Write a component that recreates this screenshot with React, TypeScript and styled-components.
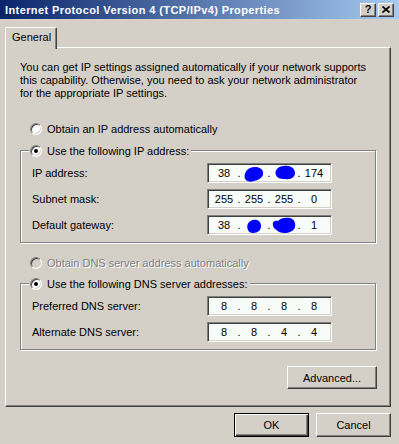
import React from "react";
import styled, { createGlobalStyle } from "styled-components";

const Global = createGlobalStyle`
  html, body { margin: 0; padding: 0; background: #d4d0c8; }
  body { font-family: "Liberation Sans", Arial, sans-serif; font-size: 11px; color: #000; }
  * { box-sizing: border-box; }
`;

const Window = styled.div`
  width: 399px;
  height: 444px;
  display: flex;
  flex-direction: column;
  background: #d4d0c8;
  overflow: hidden;
`;

const TitleBar = styled.div`
  height: 19px;
  flex: none;
  display: flex;
  align-items: center;
  justify-content: space-between;
  padding: 0 5px;
  background: linear-gradient(to right, #0a246a, #a6caf0);
`;

const Title = styled.span`
  color: #fff;
  font-weight: bold;
  font-size: 11px;
  letter-spacing: 0.4px;
  white-space: nowrap;
`;

const CaptionButtons = styled.div`
  display: flex;
  gap: 2px;
`;

const CaptionButton = styled.div`
  width: 16px;
  height: 14px;
  display: flex;
  align-items: center;
  justify-content: center;
  background: #d4d0c8;
  border: 1px solid;
  border-color: #fff #404040 #404040 #fff;
  box-shadow: inset -1px -1px 0 #808080;
  font-weight: bold;
  font-size: 11px;
  line-height: 1;
`;

const Body = styled.div`
  flex: 1;
  display: flex;
  flex-direction: column;
  padding: 8px 8px 8px 5px;
`;

const TabStrip = styled.div`
  display: flex;
  height: 20px;
`;

const Tab = styled.div`
  position: relative;
  z-index: 1;
  width: 52px;
  height: 22px;
  display: flex;
  align-items: flex-start;
  padding: 3px 0 0 6px;
  background: #d4d0c8;
  border-top: 1px solid #fff;
  border-left: 1px solid #fff;
  border-right: 1px solid #404040;
  border-radius: 2px 2px 0 0;
  box-shadow: inset -1px 0 0 #808080;
`;

const Panel = styled.div`
  height: 360px;
  display: flex;
  flex-direction: column;
  padding: 13px 14px 0 14px;
  border: 1px solid;
  border-color: #fff #404040 #404040 #fff;
  box-shadow: inset -1px -1px 0 #808080;
`;

const Description = styled.p`
  margin: 0;
  max-width: 348px;
  line-height: 13px;
`;

const RadioRow = styled.label<{ $indent?: number; $gap?: number; $disabled?: boolean }>`
  display: flex;
  align-items: center;
  gap: 5px;
  height: 13px;
  margin-left: ${(p) => p.$indent ?? 0}px;
  margin-top: ${(p) => p.$gap ?? 0}px;
  color: ${(p) => (p.$disabled ? "#808080" : "#000")};
  text-shadow: ${(p) => (p.$disabled ? "1px 1px 0 #fff" : "none")};
  white-space: nowrap;
`;

const RadioCircle = styled.span<{ $checked?: boolean; $disabled?: boolean }>`
  position: relative;
  width: 12px;
  height: 12px;
  flex: none;
  border-radius: 50%;
  background: ${(p) => (p.$disabled ? "#d4d0c8" : "#fff")};
  border: 1px solid;
  border-color: #808080 #fff #fff #808080;
  box-shadow: inset 1px 1px 0 #404040, inset -1px -1px 0 #d4d0c8;
  &::after {
    content: "";
    display: ${(p) => (p.$checked ? "block" : "none")};
    position: absolute;
    left: 3px;
    top: 3px;
    width: 4px;
    height: 4px;
    border-radius: 50%;
    background: #000;
  }
`;

const Group = styled.fieldset<{ $gap: number }>`
  margin: ${(p) => p.$gap}px 0 0 0;
  padding: 6px 43px 7px 11px;
  min-width: 0;
  border: 1px solid #808080;
  box-shadow: inset 1px 1px 0 #fff, 1px 1px 0 #fff;
`;

const Legend = styled.legend`
  padding: 0 2px 0 1px;
  margin-left: -3px;
  background: #d4d0c8;
`;

const FieldGrid = styled.div`
  display: grid;
  grid-template-columns: 1fr 125px;
  row-gap: 6px;
  align-items: center;
`;

const FieldLabel = styled.span`
  white-space: nowrap;
`;

const IPBox = styled.div`
  width: 125px;
  height: 20px;
  display: grid;
  grid-template-columns: 24px 6px 24px 6px 24px 6px 24px;
  align-items: center;
  justify-items: center;
  padding-left: 4px;
  background: #f8fcf8;
  border: 1px solid;
  border-color: #808080 #fff #fff #808080;
  box-shadow: inset 1px 1px 0 #404040, inset -1px -1px 0 #d4d0c8;
`;

const Octet = styled.span`
  position: relative;
  width: 24px;
  height: 16px;
  display: flex;
  align-items: center;
  justify-content: center;
`;

const Dot = styled.span`
  text-align: center;
`;

const BlobSvg = styled.svg`
  overflow: visible;
`;

const Button = styled.button<{ $w: number; $h: number; $default?: boolean }>`
  width: ${(p) => p.$w}px;
  height: ${(p) => p.$h}px;
  padding: 0;
  font: inherit;
  color: #000;
  background: #d4d0c8;
  border: 1px solid;
  border-color: ${(p) => (p.$default ? "#000" : "#fff #404040 #404040 #fff")};
  box-shadow: ${(p) =>
    p.$default
      ? "inset 1px 1px 0 #fff, inset -1px -1px 0 #404040, inset -2px -2px 0 #808080"
      : "inset -1px -1px 0 #808080"};
`;

const AdvancedRow = styled.div`
  display: flex;
  justify-content: flex-end;
  margin-top: 16px;
  margin-right: -1px;
`;

const Footer = styled.div`
  display: flex;
  justify-content: flex-end;
  gap: 7px;
  margin-top: 6px;
`;

const blobPaths: Record<string, string> = {
  a: "M3 15 C0 12 2 5 7 3 C12 1 19 2 20 7 C21 12 16 15 11 16 C8 17 5 17 3 15Z",
  b: "M2 10 C0 6 4 1 10 1 C16 0 21 3 21 8 C21 12 17 15 11 14 C6 14 3 13 2 10Z",
  c: "M3 12 C1 8 3 3 8 2 C13 1 16 4 16 8 C16 12 13 15 8 15 C5 15 4 14 3 12Z",
  d: "M1 8 C0 5 3 3 6 4 C8 1 14 0 18 1 C22 2 24 6 23 10 C22 14 17 16 12 16 C7 16 5 13 3 12 C2 11 1 10 1 8Z",
};

const Blob = ({ v, x, y }: { v: string; x: number; y: number }) => (
  <BlobSvg width={24} height={16} viewBox="0 0 24 16">
    <g transform={`translate(${x} ${y})`}>
      <path d={blobPaths[v]} fill="#0000ff" />
    </g>
  </BlobSvg>
);

type Oct = string | React.ReactNode;

const IPField = ({ octets }: { octets: Oct[] }) => (
  <IPBox>
    {octets.map((o, i) => (
      <React.Fragment key={i}>
        {i > 0 && <Dot>.</Dot>}
        <Octet>{o}</Octet>
      </React.Fragment>
    ))}
  </IPBox>
);

export default function App() {
  return (
    <>
      <Global />
      <Window>
        <TitleBar>
          <Title>Internet Protocol Version 4 (TCP/IPv4) Properties</Title>
          <CaptionButtons>
            <CaptionButton>?</CaptionButton>
            <CaptionButton>
              <svg width="8" height="7" viewBox="0 0 8 7">
                <path d="M0.5 0.5 L7.5 6.5 M7.5 0.5 L0.5 6.5" stroke="#000" strokeWidth="1.6" />
              </svg>
            </CaptionButton>
          </CaptionButtons>
        </TitleBar>
        <Body>
          <TabStrip>
            <Tab>General</Tab>
          </TabStrip>
          <Panel>
            <Description>
              You can get IP settings assigned automatically if your network supports
              this capability. Otherwise, you need to ask your network administrator
              for the appropriate IP settings.
            </Description>
            <RadioRow $indent={10} $gap={22}>
              <RadioCircle />
              Obtain an IP address automatically
            </RadioRow>
            <Group $gap={9}>
              <Legend>
                <RadioRow>
                  <RadioCircle $checked />
                  Use the following IP address:
                </RadioRow>
              </Legend>
              <FieldGrid>
                <FieldLabel>IP address:</FieldLabel>
                <IPField
                  octets={[
                    "38",
                    <Blob key="a" v="a" x={1} y={0} />,
                    <Blob key="b" v="b" x={2} y={0} />,
                    "174",
                  ]}
                />
                <FieldLabel>Subnet mask:</FieldLabel>
                <IPField octets={["255", "255", "255", "0"]} />
                <FieldLabel>Default gateway:</FieldLabel>
                <IPField
                  octets={[
                    "38",
                    <Blob key="c" v="c" x={3} y={1} />,
                    <Blob key="d" v="d" x={0} y={0} />,
                    "1",
                  ]}
                />
              </FieldGrid>
            </Group>
            <RadioRow $indent={10} $gap={13} $disabled>
              <RadioCircle $disabled />
              Obtain DNS server address automatically
            </RadioRow>
            <Group $gap={8}>
              <Legend>
                <RadioRow>
                  <RadioCircle $checked />
                  Use the following DNS server addresses:
                </RadioRow>
              </Legend>
              <FieldGrid>
                <FieldLabel>Preferred DNS server:</FieldLabel>
                <IPField octets={["8", "8", "8", "8"]} />
                <FieldLabel>Alternate DNS server:</FieldLabel>
                <IPField octets={["8", "8", "4", "4"]} />
              </FieldGrid>
            </Group>
            <AdvancedRow>
              <Button $w={90} $h={23}>Advanced...</Button>
            </AdvancedRow>
          </Panel>
          <Footer>
            <Button $w={75} $h={24} $default>OK</Button>
            <Button $w={75} $h={24}>Cancel</Button>
          </Footer>
        </Body>
      </Window>
    </>
  );
}
